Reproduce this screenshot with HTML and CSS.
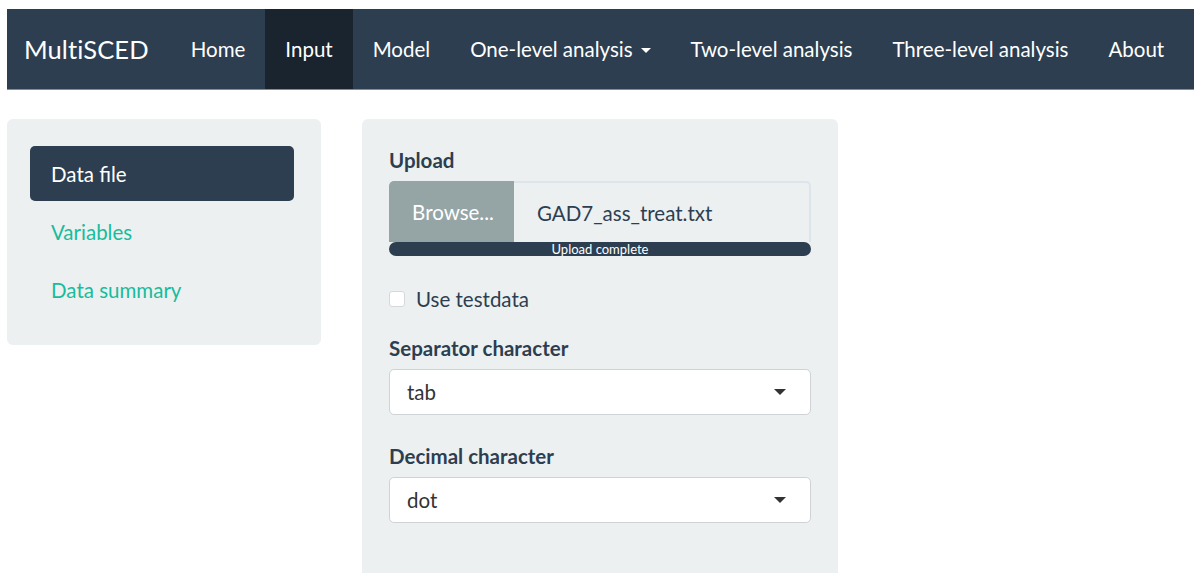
FILE: index.html
```html
<!DOCTYPE html>
<html lang="en">
<head>
<meta charset="utf-8">
<title>MultiSCED</title>
<link rel="stylesheet" href="styles.css">
</head>
<body>
<nav class="navbar">
  <span class="brand">MultiSCED</span>
  <ul class="nav">
    <li class="nav-item">Home</li>
    <li class="nav-item active">Input</li>
    <li class="nav-item">Model</li>
    <li class="nav-item">One-level analysis <span class="caret"></span></li>
    <li class="nav-item">Two-level analysis</li>
    <li class="nav-item">Three-level analysis</li>
    <li class="nav-item">About</li>
  </ul>
</nav>

<div class="content">
  <aside class="side-panel">
    <ul class="pills">
      <li class="pill active">Data file</li>
      <li class="pill">Variables</li>
      <li class="pill">Data summary</li>
    </ul>
  </aside>

  <main class="main-panel">
    <div class="form-group">
      <label class="control-label">Upload</label>
      <div class="file-group">
        <span class="browse-btn">Browse...</span>
        <span class="file-name">GAD7_ass_treat.txt</span>
      </div>
      <div class="progress">Upload complete</div>
    </div>

    <div class="checkbox-row">
      <span class="checkbox"></span>
      <span class="checkbox-label">Use testdata</span>
    </div>

    <div class="form-group">
      <label class="control-label">Separator character</label>
      <div class="select">
        <span>tab</span>
        <span class="select-caret"></span>
      </div>
    </div>

    <div class="form-group">
      <label class="control-label">Decimal character</label>
      <div class="select">
        <span>dot</span>
        <span class="select-caret"></span>
      </div>
    </div>
  </main>
</div>
</body>
</html>
```

FILE: styles.css
```css
* {
  box-sizing: border-box;
}

body {
  margin: 9px 0 0 7px;
  font-family: Lato, "Open Sans", sans-serif;
  font-size: 20.5px;
  color: #2c3e50;
  background: #ffffff;
}

/* top navigation bar */
.navbar {
  display: flex;
  align-items: stretch;
  height: 81px;
  background: #2c3e50;
  border-bottom: 1px solid #7f8e9b;
  color: #ffffff;
}

.brand {
  display: flex;
  align-items: center;
  padding: 0 20px 0 17px;
  font-size: 25.5px;
  letter-spacing: 0.1px;
}

.nav {
  display: flex;
  margin: 0;
  padding: 0 0 0 2px;
  list-style: none;
}

.nav-item {
  display: flex;
  align-items: center;
  padding: 0 20px;
  font-size: 20.5px;
  white-space: nowrap;
}

.nav-item.active {
  background: #1a242f;
}

.caret {
  display: inline-block;
  margin-left: 8px;
  width: 0;
  height: 0;
  border-left: 5px solid transparent;
  border-right: 5px solid transparent;
  border-top: 5px solid #ffffff;
  position: relative;
  top: 1px;
}

/* page body */
.content {
  display: flex;
  align-items: flex-start;
  gap: 41px;
  margin-top: 29px;
}

.side-panel {
  width: 314px;
  height: 226px;
  padding: 27px 27px 0 23px;
  background: #ecf0f1;
  border-radius: 6px;
}

.pills {
  margin: 0;
  padding: 0;
  list-style: none;
  display: flex;
  flex-direction: column;
  gap: 3px;
}

.pill {
  height: 55px;
  display: flex;
  align-items: center;
  padding: 0 21px;
  color: #18bc9c;
  border-radius: 5px;
}

.pill.active {
  background: #2c3e50;
  color: #ffffff;
}

.main-panel {
  width: 476px;
  height: 460px;
  padding: 27px 27px 0 27px;
  background: #ecf0f1;
  border-radius: 6px 6px 0 0;
}

.form-group {
  margin-bottom: 27px;
}

.control-label {
  display: block;
  font-weight: bold;
  line-height: 28px;
  margin-bottom: 7px;
}

.file-group {
  display: flex;
  height: 61px;
}

.browse-btn {
  display: flex;
  align-items: center;
  justify-content: center;
  width: 125px;
  padding-left: 3px;
  background: #95a5a6;
  color: #ffffff;
  border-radius: 5px 0 0 0;
}

.file-name {
  flex: 1;
  display: flex;
  align-items: center;
  padding-left: 23px;
  background: #ecf0f1;
  border: 2px solid #dce4ec;
  border-left: none;
  border-bottom: none;
  border-radius: 0 5px 0 0;
}

.progress {
  height: 14px;
  background: #2c3e50;
  border-radius: 7px;
  color: #ffffff;
  font-size: 13px;
  line-height: 14px;
  text-align: center;
}

.form-group:first-child {
  margin-bottom: 0;
}

.checkbox-row {
  display: flex;
  align-items: center;
  gap: 11px;
  margin-top: 34px;
  margin-bottom: 26px;
}

.checkbox {
  width: 16px;
  height: 16px;
  background: #ffffff;
  border: 1px solid #d5d9dc;
  border-radius: 3px;
}

.checkbox-label {
  line-height: 18px;
}

.select {
  height: 46px;
  display: flex;
  align-items: center;
  justify-content: space-between;
  padding: 0 24px 0 17px;
  background: #ffffff;
  border: 1px solid #cfd3d6;
  border-radius: 5px;
  color: #333333;
}

.select-caret {
  width: 0;
  height: 0;
  border-left: 6px solid transparent;
  border-right: 6px solid transparent;
  border-top: 6px solid #333333;
}
```
